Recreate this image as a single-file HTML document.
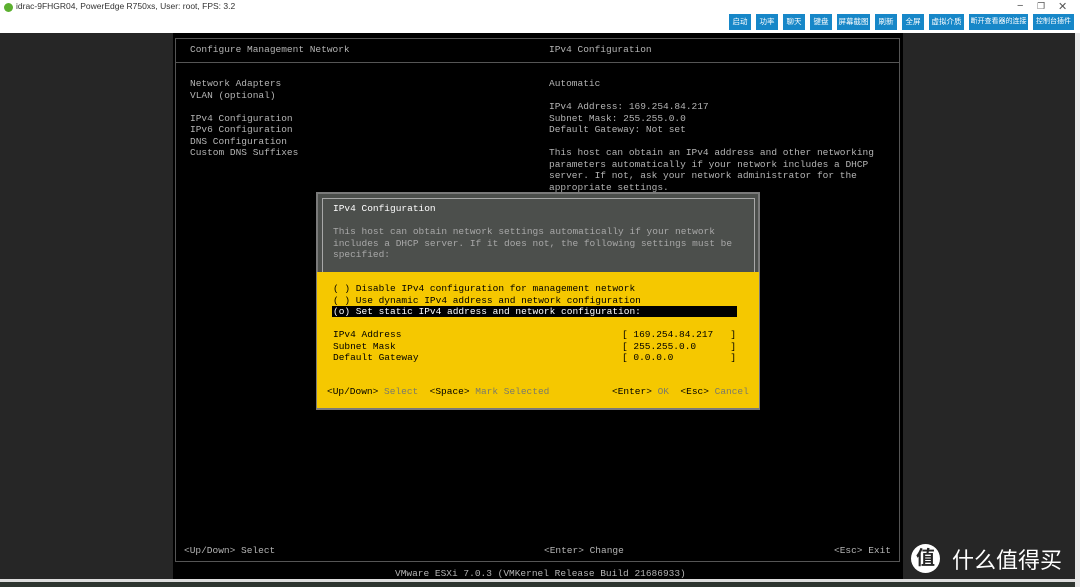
<!DOCTYPE html>
<html><head><meta charset="utf-8"><style>
*{margin:0;padding:0;box-sizing:border-box}
body{width:1080px;height:587px;overflow:hidden;background:#262626;position:relative;font-family:"Liberation Sans","Noto Sans CJK SC",sans-serif}
.a{position:absolute}
.top{left:0;top:0;width:1080px;height:33px;background:#fff}
.btn{position:absolute;top:14px;height:16px;background:#1787c8;color:#fff;font-size:7.5px;line-height:16px;text-align:center;white-space:nowrap;overflow:hidden;font-family:"Liberation Sans","Noto Sans CJK SC",sans-serif}
.m{font-family:"Liberation Mono",monospace;font-size:9.5px;line-height:11.5px;white-space:pre;color:#b4b4b4}
</style></head><body>
<div class="a top"></div>
<div class="a" style="left:4px;top:3px;width:9px;height:9px;border-radius:50%;background:#5cb030"></div>
<div class="a" style="left:16px;top:1px;font-size:8.5px;color:#333">idrac-9FHGR04, PowerEdge R750xs, User: root, FPS: 3.2</div>
<div class="a" style="left:1017px;top:0;font-size:11px;color:#555">−</div>
<div class="a" style="left:1037px;top:1px;font-size:9px;color:#555">❐</div>
<div class="a" style="left:1058px;top:0;font-size:11px;color:#555">✕</div>
<div class="btn" style="left:729px;width:22px">启动</div>
<div class="btn" style="left:756px;width:22px">功率</div>
<div class="btn" style="left:783px;width:22px">聊天</div>
<div class="btn" style="left:810px;width:22px">键盘</div>
<div class="btn" style="left:837px;width:33px">屏幕截图</div>
<div class="btn" style="left:875px;width:22px">刷新</div>
<div class="btn" style="left:902px;width:22px">全屏</div>
<div class="btn" style="left:929px;width:35px">虚拟介质</div>
<div class="btn" style="left:969px;width:59px;font-size:7px">断开查看器的连接</div>
<div class="btn" style="left:1033px;width:41px;font-size:7px">控制台插件</div>
<div class="a" style="left:1075px;top:33px;width:5px;height:554px;background:#e8e8e8"></div>
<div class="a" style="left:173px;top:33px;width:730px;height:546px;background:#000"></div>
<div class="a" style="left:175px;top:38px;width:725px;height:524px;border:1px solid #555"></div>
<div class="a" style="left:176px;top:62px;width:723px;height:1px;background:#555"></div>
<div class="a" style="left:0;top:579px;width:1075px;height:3px;background:#ddd"></div>
<div class="a" style="left:0;top:582px;width:1075px;height:5px;background:#2e3530"></div>
<div class="a m" style="left:190px;top:44px">Configure Management Network</div>
<div class="a m" style="left:549px;top:44px">IPv4 Configuration</div>
<div class="a m" style="left:190px;top:78px">Network Adapters
VLAN (optional)

IPv4 Configuration
IPv6 Configuration
DNS Configuration
Custom DNS Suffixes</div>
<div class="a m" style="left:549px;top:78px">Automatic

IPv4 Address: 169.254.84.217
Subnet Mask: 255.255.0.0
Default Gateway: Not set

This host can obtain an IPv4 address and other networking
parameters automatically if your network includes a DHCP
server. If not, ask your network administrator for the
appropriate settings.</div>
<div class="a m" style="left:184px;top:545px">&lt;Up/Down&gt; Select</div>
<div class="a m" style="left:544px;top:545px">&lt;Enter&gt; Change</div>
<div class="a m" style="left:834px;top:545px">&lt;Esc&gt; Exit</div>
<div class="a m" style="left:395px;top:568px">VMware ESXi 7.0.3 (VMKernel Release Build 21686933)</div>
<!-- popup -->
<div class="a" style="left:316px;top:192px;width:444px;height:218px;background:#7a7a7a"></div>
<div class="a" style="left:318px;top:194px;width:440px;height:78px;background:#4c4f4c"></div>
<div class="a" style="left:322px;top:198px;width:433px;height:80px;border:1px solid #a8a8a8;border-bottom:none"></div>
<div class="a" style="left:317px;top:272px;width:442px;height:136px;background:#f5c800"></div>
<div class="a m" style="left:333px;top:203px;color:#fff">IPv4 Configuration</div>
<div class="a m" style="left:333px;top:226px;color:#a8a8a8">This host can obtain network settings automatically if your network
includes a DHCP server. If it does not, the following settings must be
specified:</div>
<div class="a" style="left:332px;top:306px;width:405px;height:11px;background:#000"></div>
<div class="a m" style="left:333px;top:283px;color:#000">( ) Disable IPv4 configuration for management network
( ) Use dynamic IPv4 address and network configuration
<span style="color:#fff">(o) Set static IPv4 address and network configuration:</span>

IPv4 Address
Subnet Mask
Default Gateway</div>
<div class="a m" style="left:622px;top:329px;color:#000">[ 169.254.84.217   ]
[ 255.255.0.0      ]
[ 0.0.0.0          ]</div>
<div class="a m" style="left:327px;top:386px;color:#000">&lt;Up/Down&gt; <span style="color:#7a7a6a">Select</span>  &lt;Space&gt; <span style="color:#7a7a6a">Mark Selected</span></div>
<div class="a m" style="left:612px;top:386px;color:#000">&lt;Enter&gt; <span style="color:#7a7a6a">OK</span>  &lt;Esc&gt; <span style="color:#7a7a6a">Cancel</span></div>
<!-- watermark -->
<div class="a" style="left:911px;top:544px;width:29px;height:29px;border-radius:50%;background:#fff;color:#262626;font-size:19px;line-height:29px;text-align:center;font-weight:bold">值</div>
<div class="a" style="left:952px;top:544px;color:#fff;font-size:22px;line-height:30px;font-family:'Noto Sans CJK SC',sans-serif">什么值得买</div>
</body></html>
